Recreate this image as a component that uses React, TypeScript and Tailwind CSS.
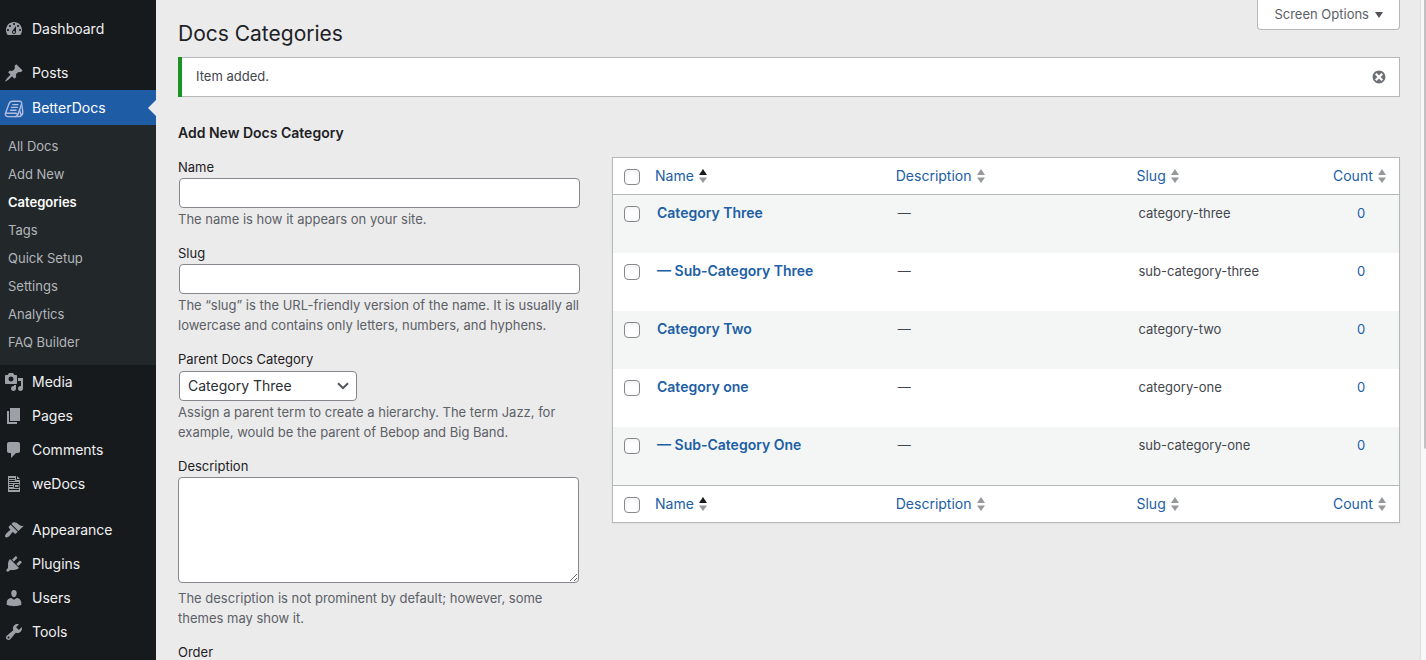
import { useState } from "react";
import type { ReactNode } from "react";
import { clsx } from "clsx";

const ICONS = {
  dashboard:
    "M3.76 16h12.48c1.1-1.37 1.76-3.11 1.76-5 0-4.42-3.58-8-8-8s-8 3.58-8 8c0 1.89.66 3.63 1.76 5zM10 4c.55 0 1 .45 1 1s-.45 1-1 1-1-.45-1-1 .45-1 1-1zM6 6c.55 0 1 .45 1 1s-.45 1-1 1-1-.45-1-1 .45-1 1-1zm8 0c.55 0 1 .45 1 1s-.45 1-1 1-1-.45-1-1 .45-1 1-1zm-5.37 5.55L12 7v6c0 1.1-.9 2-2 2s-2-.9-2-2c0-.57.24-1.08.63-1.45zM4 10c.55 0 1 .45 1 1s-.45 1-1 1-1-.45-1-1 .45-1 1-1zm12 0c.55 0 1 .45 1 1s-.45 1-1 1-1-.45-1-1 .45-1 1-1zm-5 3c0-.55-.45-1-1-1s-1 .45-1 1 .45 1 1 1 1-.45 1-1z",
  pin: "M10.44 3.02l1.82-1.82 6.36 6.35-1.83 1.82c-1.05-.68-2.48-.57-3.41.36l-.75.75c-.92.93-1.04 2.35-.35 3.41l-1.83 1.82-2.41-2.41-2.8 2.79c-.42.42-3.38 2.71-3.8 2.29s1.86-3.39 2.28-3.81l2.79-2.79L4.1 9.36l1.83-1.82c1.05.69 2.48.57 3.4-.36l.75-.75c.93-.92 1.05-2.35.36-3.41z",
  media:
    "M13 11V4c0-.55-.45-1-1-1h-1.67L9 1H5L3.67 3H2c-.55 0-1 .45-1 1v7c0 .55.45 1 1 1h10c.55 0 1-.45 1-1zM7 4.5c1.38 0 2.5 1.12 2.5 2.5S8.38 9.5 7 9.5 4.5 8.38 4.5 7 5.62 4.5 7 4.5zM14 6h5v10.5c0 1.38-1.12 2.5-2.5 2.5S14 17.88 14 16.5s1.12-2.5 2.5-2.5c.17 0 .34.02.5.05V9h-3V6zm-4 8.05V13h2v3.5c0 1.38-1.12 2.5-2.5 2.5S7 17.88 7 16.5 8.12 14 9.5 14c.17 0 .34.02.5.05z",
  pages: "M6 15V2h10v13H6zm-1 1h8v2H3V5h2v11z",
  comments:
    "M5 2h9c1.1 0 2 .9 2 2v7c0 1.1-.9 2-2 2h-2l-5 5v-5H5c-1.1 0-2-.9-2-2V4c0-1.1.9-2 2-2z",
  appearance:
    "M14.48 11.06L7.41 3.99l1.5-1.5c.5-.56 2.3-.47 3.51.32 1.21.8 1.43 1.28 2.91 2.1 1.18.64 2.45 1.26 4.45.85zm-.71.71L6.7 4.7 4.93 6.47c-.39.39-.39 1.02 0 1.41l1.06 1.06c.39.39.39 1.03 0 1.42-.6.6-1.43 1.11-2.21 1.69-.35.26-.7.53-1.01.84C1.43 14.23.4 16.08 1.4 17.07c.99 1 2.84-.03 4.18-1.36.31-.31.58-.66.85-1.02.57-.78 1.08-1.61 1.69-2.21.39-.39 1.02-.39 1.41 0l1.06 1.06c.39.39 1.02.39 1.41 0z",
  plugins:
    "M13.11 4.36L9.87 7.6 8 5.73l3.24-3.24c.35-.34 1.05-.2 1.56.32.52.51.66 1.21.31 1.55zm-8 1.77l.91-1.12 9.01 9.01-1.19.84c-.71.71-2.63 1.16-3.82 1.16H6.14L4.9 17.26c-.59.59-1.54.59-2.12 0-.59-.58-.59-1.53 0-2.12l1.24-1.24v-3.88c0-1.13.4-3.19 1.09-3.89zm7.26 3.97l3.24-3.24c.34-.35 1.04-.21 1.55.31.52.51.66 1.21.31 1.55l-3.24 3.25z",
  users:
    "M10 9.25c-2.27 0-2.73-3.44-2.73-3.44C7 4.02 7.82 2 9.97 2c2.16 0 2.98 2.02 2.71 3.81 0 0-.41 3.44-2.68 3.44zm0 2.57L12.72 10c2.39 0 4.52 2.33 4.52 4.53v2.49s-3.65 1.13-7.24 1.13c-3.65 0-7.24-1.13-7.24-1.13v-2.49c0-2.25 1.94-4.48 4.47-4.48z",
  tools:
    "M16.68 9.77c-1.34 1.34-3.3 1.67-4.95.99l-5.41 6.52c-.99.99-2.59.99-3.58 0s-.99-2.59 0-3.57l6.52-5.42c-.68-1.65-.35-3.61.99-4.95 1.28-1.28 3.12-1.62 4.72-1.06l-2.89 2.89 2.82 2.82 2.86-2.87c.53 1.58.18 3.39-1.08 4.65zM3.81 16.21c.4.39 1.04.39 1.43 0 .4-.4.4-1.04 0-1.43-.39-.4-1.03-.4-1.43 0-.39.39-.39 1.03 0 1.43z",
  dismiss:
    "M10 2c4.42 0 8 3.58 8 8s-3.58 8-8 8-8-3.58-8-8 3.58-8 8-8zm5 11l-3-3 3-3-2-2-3 3-3-3-2 2 3 3-3 3 2 2 3-3 3 3z",
};

function Icon({ name, className = "size-5" }: { name: keyof typeof ICONS; className?: string }) {
  return (
    <svg viewBox="0 0 20 20" fill="currentColor" className={className} aria-hidden="true">
      <path d={ICONS[name]} />
    </svg>
  );
}

function BetterDocsIcon() {
  return (
    <svg
      viewBox="0 0 20 20"
      fill="none"
      stroke="currentColor"
      strokeWidth="1.4"
      strokeLinecap="round"
      strokeLinejoin="round"
      className="size-5 text-[#b4bde0]"
      aria-hidden="true"
    >
      <path d="M8.500 3.300h7c1.700 0 2.600 1.300 2.100 2.800l-3.400 9.700c-.6 1.800-1.700 2.800-3.400 2.800H4c-2 0-3.100-1.600-2.500-3.400L5 5.800c.6-1.600 1.700-2.500 3.500-2.500z" />
      <path d="M2 15.300h9.600c1.200 0 1.900.5 1.900 1.400M17.700 6.500l1 6.500c.5 3.300-1.300 5.600-4.200 5.600h-3.500M15.600 12.500l1.500 4.500" />
      <path d="M8.800 6.600h5.200M7.500 9.400h5.800M6.500 12.200h5.500" />
    </svg>
  );
}

function WeDocsIcon() {
  return (
    <svg viewBox="0 0 20 20" className="size-5" aria-hidden="true">
      <path fill="currentColor" d="M4 2h9l3 3v13H4z" />
      <path
        stroke="#171a1d"
        fill="none"
        d="M12.500 2v3.500H16M5 4.500h6M5 6.500h6M5 8.500h10M5 10.500h4M10.500 10.500H15v3h-4.500zM5 12.500h4M5 15.500h10"
      />
    </svg>
  );
}

const SUBMENU = [
  "All Docs",
  "Add New",
  "Categories",
  "Tags",
  "Quick Setup",
  "Settings",
  "Analytics",
  "FAQ Builder",
];

function MenuItem({ icon, label, active }: { icon: ReactNode; label: string; active?: boolean }) {
  return (
    <a
      href="#"
      className={clsx(
        "relative flex items-center gap-2 pl-1 text-sm",
        active ? "h-[35px] bg-[#1e5ca6] text-white" : "h-[34px] text-[#f0f0f1] hover:text-[#72aee6]"
      )}
    >
      <span className={clsx(!active && "text-[#9ca1a8]")}>{icon}</span>
      {label}
      {active && (
        <span className="absolute right-0 border-y-8 border-r-8 border-y-transparent border-r-[#ebebeb]" />
      )}
    </a>
  );
}

function Sidebar() {
  return (
    <nav className="w-[156px] shrink-0 bg-[#171a1d] pt-3">
      <MenuItem icon={<Icon name="dashboard" />} label="Dashboard" />
      <div className="h-2.5" />
      <MenuItem icon={<Icon name="pin" />} label="Posts" />
      <MenuItem icon={<BetterDocsIcon />} label="BetterDocs" active />
      <ul className="bg-[#22272a] py-2">
        {SUBMENU.map((item) => (
          <li key={item}>
            <a
              href="#"
              className={clsx(
                "flex h-7 items-center px-2 text-[13px]",
                item === "Categories" ? "font-semibold text-white" : "text-[#b3b6ba] hover:text-white"
              )}
            >
              {item}
            </a>
          </li>
        ))}
      </ul>
      <MenuItem icon={<Icon name="media" />} label="Media" />
      <MenuItem icon={<Icon name="pages" />} label="Pages" />
      <MenuItem icon={<Icon name="comments" />} label="Comments" />
      <MenuItem icon={<WeDocsIcon />} label="weDocs" />
      <div className="h-3" />
      <MenuItem icon={<Icon name="appearance" />} label="Appearance" />
      <MenuItem icon={<Icon name="plugins" />} label="Plugins" />
      <MenuItem icon={<Icon name="users" />} label="Users" />
      <MenuItem icon={<Icon name="tools" />} label="Tools" />
    </nav>
  );
}

interface FieldProps {
  id: string;
  label: string;
  help?: string;
  helpClass?: string;
  children: ReactNode;
}

function Field({ id, label, help, helpClass = "pt-px", children }: FieldProps) {
  return (
    <div className="mb-3.5">
      <label htmlFor={id} className="block pb-px leading-5 text-[#1d2125]">
        {label}
      </label>
      {children}
      {help && <p className={clsx("leading-5 text-[#5c6067]", helpClass)}>{help}</p>}
    </div>
  );
}

const BOX = "block rounded border border-[#85878d] bg-white px-2 text-sm text-[#2a2e33]";

function CategoryForm() {
  const [parent, setParent] = useState("Category Three");

  return (
    <form className="w-[402px] shrink-0">
      <h2 className="mb-3.5 text-sm leading-5 font-semibold text-[#1d2125]">Add New Docs Category</h2>
      <Field id="name" label="Name" help="The name is how it appears on your site.">
        <input id="name" type="text" className={clsx(BOX, "ml-px h-[30px] w-[401px]")} />
      </Field>
      <Field
        id="slug"
        label="Slug"
        help="The “slug” is the URL-friendly version of the name. It is usually all lowercase and contains only letters, numbers, and hyphens."
      >
        <input id="slug" type="text" className={clsx(BOX, "ml-px h-[30px] w-[401px]")} />
      </Field>
      <Field
        id="parent"
        label="Parent Docs Category"
        help="Assign a parent term to create a hierarchy. The term Jazz, for example, would be the parent of Bebop and Big Band."
      >
        <div className="relative mt-px ml-px w-[178px]">
          <select
            id="parent"
            value={parent}
            onChange={(e) => setParent(e.target.value)}
            className={clsx(BOX, "h-[30px] w-full appearance-none pr-6")}
          >
            <option>None</option>
            <option>Category Three</option>
            <option>Category Two</option>
            <option>Category one</option>
          </select>
          <svg
            viewBox="0 0 12 8"
            fill="none"
            stroke="#50545a"
            strokeWidth="2"
            className="pointer-events-none absolute top-[11px] right-2 h-2 w-3"
            aria-hidden="true"
          >
            <path d="M1 1.200l5 5 5-5" />
          </svg>
        </div>
      </Field>
      <Field
        id="description"
        label="Description"
        help="The description is not prominent by default; however, some themes may show it."
        helpClass="pt-[5px]"
      >
        <textarea id="description" className={clsx(BOX, "h-[106px] w-[401px] resize")} />
      </Field>
      <Field id="order" label="Order">
        <input id="order" type="number" className={clsx(BOX, "ml-px h-[30px] w-[401px]")} />
      </Field>
    </form>
  );
}

const CATEGORIES = [
  { name: "Category Three", slug: "category-three" },
  { name: "— Sub-Category Three", slug: "sub-category-three" },
  { name: "Category Two", slug: "category-two" },
  { name: "Category one", slug: "category-one" },
  { name: "— Sub-Category One", slug: "sub-category-one" },
];

function Checkbox({ label }: { label: string }) {
  return (
    <input
      type="checkbox"
      aria-label={label}
      className="block size-4 appearance-none rounded border border-[#85878d] bg-white shadow-inner checked:bg-[#1e5ca6]"
    />
  );
}

function SortHeader({ label, sorted }: { label: string; sorted?: boolean }) {
  return (
    <th scope="col" className="p-0 pl-2.5 text-left font-normal">
      <a href="#" className="flex items-center gap-1 text-sm leading-5 text-[#205ea6]">
        {label}
        <svg viewBox="0 0 10 16" className="h-4 w-2.5" fill="#96999c" aria-hidden="true">
          <path d="M5 1l4 6H1z" fill={sorted ? "#17191c" : undefined} />
          <path d="M5 15L1 9.500h8z" />
        </svg>
      </a>
    </th>
  );
}

function HeaderRow() {
  return (
    <tr className="h-9">
      <td className="p-0 pt-0.5 pl-[11px]">
        <Checkbox label="Select all" />
      </td>
      <SortHeader label="Name" sorted />
      <SortHeader label="Description" />
      <SortHeader label="Slug" />
      <SortHeader label="Count" />
    </tr>
  );
}

function CategoryTable() {
  return (
    <div className="mt-[34px] min-w-0 flex-1 self-start border border-[#b5b7ba] bg-white shadow-xs">
      <table className="w-full table-fixed border-separate border-spacing-0 text-[#43474d]">
        <colgroup>
          <col className="w-8" />
          <col />
          <col />
          <col className="w-1/4" />
          <col className="w-[76px]" />
        </colgroup>
        <thead>
          <HeaderRow />
        </thead>
        <tbody>
          {CATEGORIES.map((c, i) => (
            <tr
              key={c.slug}
              className={clsx(
                "align-top odd:bg-[#f4f6f5]",
                i === 0 || i === CATEGORIES.length - 1 ? "h-[59px]" : "h-[58px]",
                i === 0 && "[&>td]:border-t [&>td]:border-[#b5b7ba]",
                i === CATEGORIES.length - 1 && "[&>td]:border-b [&>td]:border-[#b5b7ba]"
              )}
            >
              <td className="p-0 pt-[11px] pl-[11px]">
                <Checkbox label={"Select " + c.name} />
              </td>
              <td className="px-3 py-2">
                <a href="#" className="text-sm leading-5 font-semibold text-[#205ea6]">
                  {c.name}
                </a>
              </td>
              <td className="px-3 py-2 leading-5">—</td>
              <td className="px-3 py-2 leading-5">{c.slug}</td>
              <td className="px-0 py-2 text-center leading-5">
                <a href="#" className="text-[#205ea6]">
                  0
                </a>
              </td>
            </tr>
          ))}
        </tbody>
        <tfoot>
          <HeaderRow />
        </tfoot>
      </table>
    </div>
  );
}

function Notice() {
  const [shown, setShown] = useState(true);
  if (!shown) return null;
  return (
    <div className="flex h-10 border-l-4 border-[#1a9323]">
      <div className="flex flex-1 items-center justify-between border-y border-r border-[#b5b7ba] bg-white pr-3 pl-3.5 text-[#43474d]">
        <p>Item added.</p>
        <button type="button" aria-label="Dismiss this notice" onClick={() => setShown(false)}>
          <Icon name="dismiss" className="size-4 text-[#6d7075]" />
        </button>
      </div>
    </div>
  );
}

export default function App() {
  return (
    <div className="flex h-screen overflow-hidden bg-[#ebebeb] font-['Inter',sans-serif] text-[13px]">
      <Sidebar />
      <main className="min-w-0 flex-1 pr-5 pl-[22px]">
        <div className="flex h-[57px] items-start justify-between">
          <h1 className="pt-5 text-[21px] leading-7 text-[#1d2125]">Docs Categories</h1>
          <button
            type="button"
            className="flex h-[30px] items-center gap-1.5 rounded-b border border-t-0 border-[#b5b7ba] bg-white px-4 text-[#5c6067]"
          >
            Screen Options
            <svg viewBox="0 0 8 6" className="h-1.5 w-2" fill="#50545a" aria-hidden="true">
              <path d="M0 0h8L4 6z" />
            </svg>
          </button>
        </div>
        <Notice />
        <div className="flex gap-8 pt-[26px]">
          <CategoryForm />
          <CategoryTable />
        </div>
      </main>
      {/* page scroll track */}
      <div className="flex w-1.5 shrink-0 justify-end border-l border-[#dedede] bg-[#f8f8f8]">
        <div className="h-[68%] w-0.5 rounded-bl bg-[#c1c1c1]" />
      </div>
    </div>
  );
}
